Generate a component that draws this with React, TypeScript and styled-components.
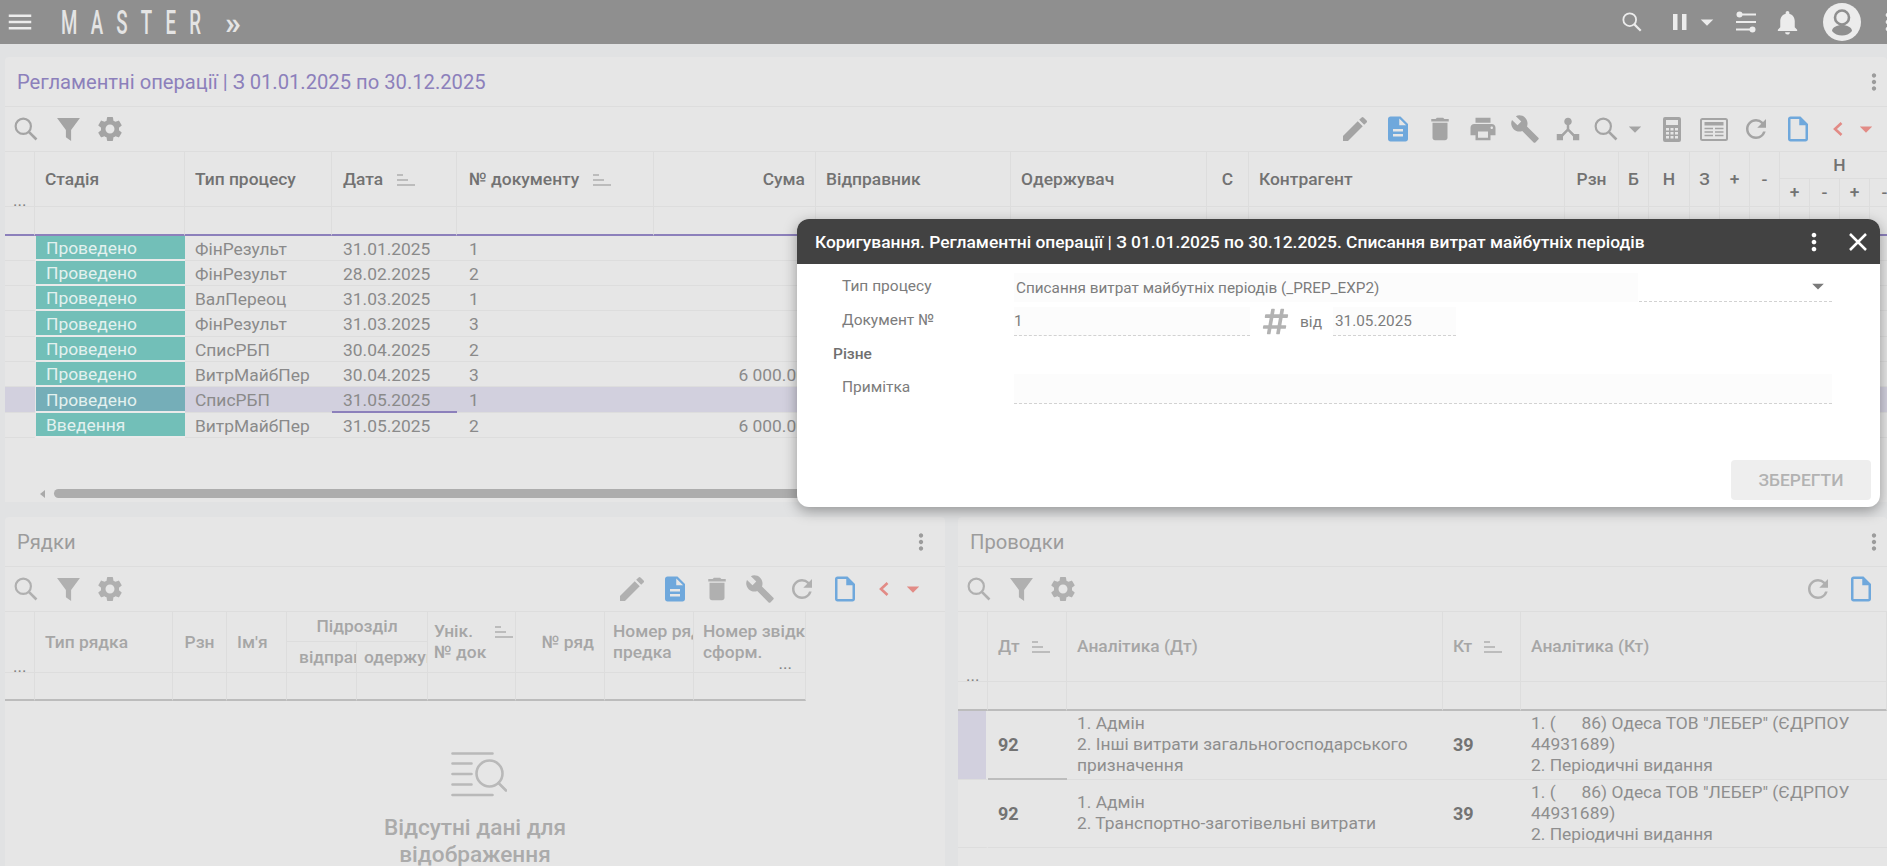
import React from 'react';

import styled, { createGlobalStyle } from 'styled-components';
import {
  MdMenu,
  MdEdit,
  MdDescription,
  MdDelete,
  MdPrint,
  MdBuild,
  MdDeviceHub,
  MdRefresh,
  MdOutlineInsertDriveFile,
  MdSettings,
  MdMoreVert,
  MdArrowDropDown,
  MdNotifications,
} from 'react-icons/md';
import { FaHashtag } from 'react-icons/fa';

const BLUE = '#6fa8dc';
const RED = '#e28b86';
const LINE = '#dddddd';

const GlobalStyle = createGlobalStyle`
  html, body {
    margin: 0;
    height: 100%;
    overflow: hidden;
    background: #e1e2e3;
    font-family: Roboto, "Noto Sans", sans-serif;
  }
`;

const Page = styled.div`
  position: relative;
  display: flex;
  flex-direction: column;
  height: 100vh;
  overflow: hidden;
`;

const TopBar = styled.header`
  flex: none;
  display: flex;
  align-items: center;
  height: 44px;
  padding-left: 5px;
  background: #8f8f8f;
  color: #ececec;
  overflow: hidden;
`;

const Logo = styled.div`
  display: flex;
  align-items: center;
  width: 162px;
  height: 44px;
  margin-left: 26px;
`;

const LogoText = styled.span`
  display: inline-block;
  font-size: 34px;
  font-weight: 500;
  letter-spacing: 24px;
  line-height: 40px;
  white-space: nowrap;
  transform: scaleX(0.55);
  transform-origin: left center;
  color: #e4e4e4;
`;

const LogoLast = styled.span`
  letter-spacing: 0;
`;

const LogoArrows = styled.span`
  margin-left: 2px;
  margin-top: 2px;
  font-size: 32px;
  line-height: 40px;
  font-weight: 700;
  color: #e4e4e4;
`;

const TopActions = styled.div`
  display: flex;
  align-items: center;
  margin-left: auto;
  flex: none;
  margin-right: -15px;
`;

const TopIcon = styled.span<{ $w: number }>`
  display: flex;
  align-items: center;
  justify-content: center;
  flex: none;
  width: ${(p) => p.$w}px;
  height: 44px;

  svg {
    flex: none;
  }
`;

const Content = styled.main`
  flex: 1;
  min-height: 0;
  display: flex;
  flex-direction: column;
  gap: 15px;
  padding: 13px 0 0 5px;
`;

const Panel = styled.section<{ $height?: number; $width?: number }>`
  display: flex;
  flex-direction: column;
  flex: ${(p) => (p.$width || p.$height ? 'none' : '1')};
  min-width: 0;
  width: ${(p) => (p.$width ? `${p.$width}px` : 'auto')};
  height: ${(p) => (p.$height ? `${p.$height}px` : 'auto')};
  background: #e6e6e6;
  border-radius: 4px 4px 0 0;
  overflow: hidden;
`;

const BottomRow = styled.div`
  flex: 1;
  min-height: 0;
  display: flex;
  gap: 13px;
`;

const PanelHead = styled.div`
  flex: none;
  display: flex;
  align-items: center;
  justify-content: space-between;
  box-sizing: border-box;
  height: 50px;
  padding: 0 0 0 12px;
  border-bottom: 1px solid ${LINE};
`;

const PanelTitle = styled.h2<{ $accent?: boolean }>`
  margin: 0;
  font-size: 20.2px;
  font-weight: 400;
  color: ${(p) => (p.$accent ? '#8c80bb' : '#9c9c9c')};
`;

const Kebab = styled.span<{ $inset?: number }>`
  display: flex;
  align-items: center;
  justify-content: center;
  width: 26px;
  margin-right: ${(p) => p.$inset ?? 0}px;
  color: #9c9c9c;
`;

const ToolBar = styled.div<{ $faded?: boolean }>`
  flex: none;
  display: flex;
  align-items: center;
  justify-content: space-between;
  box-sizing: border-box;
  height: 45px;
  border-bottom: 1px solid ${LINE};
  color: ${(p) => (p.$faded ? '#b0b0b0' : '#a4a4a4')};
`;

const ToolGroup = styled.div<{ $right?: number }>`
  display: flex;
  align-items: center;
  padding-right: ${(p) => p.$right ?? 0}px;
`;

const ToolBtn = styled.span<{ $w?: number; $tone?: string }>`
  display: flex;
  align-items: center;
  justify-content: center;
  flex: none;
  width: ${(p) => p.$w ?? 42.5}px;
  color: ${(p) => p.$tone ?? 'inherit'};

  svg {
    flex: none;
  }
`;

const TableClip = styled.div`
  flex: none;
  overflow: hidden;
`;

const Table = styled.table<{ $width: number }>`
  table-layout: fixed;
  width: ${(p) => p.$width}px;
  border-collapse: separate;
  border-spacing: 0;
`;

const HeadCell = styled.th<{ $align?: string; $faded?: boolean; $corner?: boolean; $pad?: number }>`
  box-sizing: border-box;
  padding: 0 ${(p) => (p.$corner ? 8 : p.$pad ?? (p.$align === 'center' ? 0 : 10))}px;
  font-size: 17.4px;
  font-weight: 500;
  line-height: 21px;
  text-align: ${(p) => p.$align ?? 'left'};
  vertical-align: ${(p) => (p.$corner ? 'bottom' : 'middle')};
  white-space: nowrap;
  overflow: hidden;
  color: ${(p) => (p.$faded ? '#a6a6a6' : '#727272')};
  border-right: 1px solid ${LINE};
  border-bottom: 1px solid ${LINE};
`;

const Dots = styled.span`
  display: block;
  font-size: 17px;
  font-weight: 400;
  line-height: 12px;
  color: #808080;
`;

// the "more columns" mark sits in the cell corner, below the two header lines
const DotsRight = styled(Dots)`
  position: relative;
  top: 6px;
  margin-top: -12px;
  margin-right: 4px;
  text-align: right;
`;

const FilterCell = styled.td<{ $line: string }>`
  box-sizing: border-box;
  border-right: 1px solid ${LINE};
  border-bottom: 2px solid ${(p) => p.$line};
`;

const Row = styled.tr<{ $selected?: boolean; $height: number }>`
  height: ${(p) => p.$height}px;
  background: ${(p) => (p.$selected ? '#d2d0de' : 'transparent')};
`;

const Cell = styled.td<{ $align?: string; $current?: boolean; $pad?: number }>`
  box-sizing: border-box;
  padding: 1px ${(p) => p.$pad ?? 10}px 0;
  font-size: 17.4px;
  line-height: 22px;
  white-space: nowrap;
  overflow: hidden;
  color: #8a8a8a;
  text-align: ${(p) => p.$align ?? 'left'};
  border-bottom: ${(p) => (p.$current ? '2px solid #8c80bb' : `1px solid ${LINE}`)};
`;

const StatusCell = styled.td<{ $selected?: boolean }>`
  box-sizing: border-box;
  padding: 1px 10px 0;
  font-size: 17.4px;
  line-height: 22px;
  color: #e3f1ef;
  background: ${(p) => (p.$selected ? '#75aeb8' : '#72bfb8')};
  border-left: 1px solid #e6e6e6;
  border-bottom: 2px solid #eaeaea;
`;

const EntryRow = styled.tr`
  height: 68.5px;
  vertical-align: middle;
`;

const EntryMark = styled.td<{ $selected?: boolean }>`
  box-sizing: border-box;
  background: ${(p) => (p.$selected ? '#d2d0de' : 'transparent')};
  border-right: 2px solid #e6e6e6;
  border-bottom: 1px solid ${LINE};
`;

const EntryAccount = styled.td<{ $current?: boolean }>`
  box-sizing: border-box;
  padding: 0 10px;
  font-size: 18px;
  font-weight: 700;
  color: #737373;
  border-bottom: ${(p) => (p.$current ? '2px solid #bdbdbd' : `1px solid ${LINE}`)};
`;

const EntryText = styled.td`
  box-sizing: border-box;
  padding: 0 10px;
  font-size: 17.4px;
  line-height: 21px;
  color: #8e8e8e;
  white-space: pre;
  overflow: hidden;
  border-bottom: 1px solid ${LINE};
`;

const ScrollTrack = styled.div`
  display: flex;
  align-items: center;
  gap: 9px;
  margin-top: auto;
  margin-bottom: 4px;
  padding-left: 35px;
`;

const ScrollArrow = styled.span`
  width: 0;
  height: 0;
  border-top: 4px solid transparent;
  border-bottom: 4px solid transparent;
  border-right: 5px solid #a9a9a9;
`;

const ScrollThumb = styled.span`
  width: 1700px;
  height: 9px;
  border-radius: 5px;
  background: #adadad;
`;

const EmptyState = styled.div`
  display: flex;
  flex-direction: column;
  align-items: center;
  padding-top: 51px;
  color: #ababab;
  font-size: 22.6px;
  font-weight: 500;
  line-height: 27px;
  text-align: center;
`;

const EmptyText = styled.div`
  width: 240px;
  margin-top: 16px;
`;

const EmptyMark = styled.svg`
  margin-left: 8px;
`;

const Modal = styled.div`
  position: absolute;
  left: 797px;
  top: 219px;
  display: flex;
  flex-direction: column;
  width: 1083px;
  height: 288px;
  border-radius: 12px;
  background: #ffffff;
  box-shadow: 0 4px 14px rgba(0, 0, 0, 0.35);
  overflow: hidden;
`;

const ModalHead = styled.div`
  flex: none;
  display: flex;
  align-items: center;
  box-sizing: border-box;
  height: 45px;
  padding: 0 2px 0 18px;
  background: #424242;
  color: #ffffff;
`;

const ModalTitle = styled.div`
  flex: 1;
  font-size: 17.4px;
  font-weight: 500;
  white-space: nowrap;
`;

const ModalIcon = styled.span`
  display: flex;
  align-items: center;
  justify-content: center;
  width: 40px;
  margin-left: 4px;
`;

const ModalBody = styled.div`
  flex: 1;
  display: flex;
  flex-direction: column;
  padding: 9px 48px 0 0;
`;

const FormRow = styled.div`
  display: flex;
  align-items: center;
  margin-bottom: 5px;
`;

const FormLabel = styled.label`
  flex: none;
  width: 172px;
  margin-left: 45px;
  padding-bottom: 4px;
  font-size: 15.5px;
  color: #7c7c7c;
`;

const Field = styled.div<{ $width?: number; $height?: number; $flush?: boolean }>`
  display: flex;
  align-items: center;
  box-sizing: border-box;
  flex: ${(p) => (p.$width ? 'none' : '1')};
  width: ${(p) => (p.$width ? `${p.$width}px` : 'auto')};
  height: ${(p) => p.$height ?? 29}px;
  padding: 0 ${(p) => (p.$flush ? 0 : 2)}px;
  background: #fcfcfc;
  border-bottom: 1px dashed #d2d2d2;
  font-size: 15.3px;
  color: #7c7c7c;
`;

const SelectField = styled.div`
  position: relative;
  flex: 1;
  display: flex;
  height: 29px;
  box-sizing: border-box;
  border-bottom: 1px dashed #d2d2d2;
`;

const SelectValue = styled(Field)`
  width: 624px;
  flex: none;
  border-bottom: 0;
`;

const SelectCaret = styled.span`
  position: absolute;
  right: 0;
  top: -1px;
  color: #7a7a7a;
`;

const SectionLabel = styled.div`
  height: 33px;
  margin-left: 36px;
  font-size: 15.5px;
  font-weight: 500;
  line-height: 26px;
  color: #6f6f6f;
`;

const Hash = styled.span`
  display: flex;
  width: 50px;
  justify-content: center;
  color: #b2b2b2;
`;

const ByLabel = styled.span`
  width: 33px;
  font-size: 15.5px;
  color: #7c7c7c;
`;

const ModalFoot = styled.div`
  display: flex;
  justify-content: flex-end;
  margin: auto -39px 7px 0;
`;

const SaveButton = styled.button`
  width: 140px;
  height: 40px;
  border: 0;
  border-radius: 4px;
  background: #eeeeee;
  color: #b2b2b2;
  font-family: inherit;
  font-size: 17.4px;
  font-weight: 500;
`;

// drawings the icon packages don't have in the same shape

const SearchGlyph = ({ size = 24 }: { size?: number }) => (
  <svg width={size} height={size} viewBox="0 0 22 22" fill="none" stroke="currentColor" strokeWidth="2">
    <circle cx="8.5" cy="8.5" r="7" />
    <path d="M13.6 13.6 20.6 20.6" strokeWidth="2.4" />
  </svg>
);

const FunnelGlyph = () => (
  <svg width="25" height="25" viewBox="0 0 24 24" fill="currentColor">
    <path d="M1 1h22L14.5 12.5V23l-5-3.5v-7z" />
  </svg>
);

const SlidersGlyph = () => (
  <svg width="20" height="24" viewBox="0 0 20 24" fill="currentColor">
    <circle cx="3.5" cy="4.5" r="3" />
    <rect x="5" y="3.5" width="15" height="2" />
    <rect x="0" y="11" width="20" height="2" />
    <rect x="0" y="18.5" width="15" height="2" />
    <circle cx="16.5" cy="19.5" r="3" />
  </svg>
);

const PauseGlyph = () => (
  <svg width="14" height="16" viewBox="0 0 14 16" fill="currentColor">
    <rect x="0" y="0" width="4.5" height="16" />
    <rect x="9" y="0" width="4.5" height="16" />
  </svg>
);

const AvatarGlyph = () => (
  <svg width="38" height="38" viewBox="0 0 38 38">
    <circle cx="19" cy="19" r="19" fill="#ececec" />
    <circle cx="19" cy="14.5" r="7" fill="#ececec" stroke="#8f8f8f" strokeWidth="2.6" />
    <path d="M9 28c0-3.5 5-6 10-6s10 2.5 10 6c-2.5 3-6 4.6-10 4.6S11.500 31 9 28z" fill="#8f8f8f" />
  </svg>
);

const CalcGlyph = () => (
  <svg width="18" height="25" viewBox="0 0 18 25" fill="currentColor">
    <path d="M2 0h14a2 2 0 0 1 2 2v21a2 2 0 0 1-2 2H2a2 2 0 0 1-2-2V2a2 2 0 0 1 2-2zm1 3v5h12V3z" fillRule="evenodd" />
    <g fill="#e6e6e6">
      <rect x="3" y="11" width="3" height="2.500" />
      <rect x="7.500" y="11" width="3" height="2.500" />
      <rect x="12" y="11" width="3" height="2.500" />
      <rect x="3" y="15" width="3" height="2.500" />
      <rect x="7.500" y="15" width="3" height="2.500" />
      <rect x="12" y="15" width="3" height="2.500" />
      <rect x="3" y="19" width="3" height="2.500" />
      <rect x="7.500" y="19" width="3" height="2.500" />
      <rect x="12" y="19" width="3" height="2.500" />
    </g>
  </svg>
);

const NewsGlyph = () => (
  <svg width="28" height="23" viewBox="0 0 28 23" fill="none" stroke="currentColor">
    <rect x="1" y="1" width="26" height="21" rx="1.500" strokeWidth="2" />
    <rect x="4.500" y="4" width="19" height="3.500" fill="currentColor" stroke="none" />
    <path d="M4.500 10.500h8.500M4.500 14h8.500M4.500 17.500h8.500M15 10.500h8.500M15 14h8.500M15 17.500h8.500" strokeWidth="1.500" />
  </svg>
);

const ChevronGlyph = () => (
  <svg width="10" height="14" viewBox="0 0 10 14" fill="none" stroke="currentColor" strokeWidth="2.600">
    <path d="M8.500 1 2 7l6.500 6" />
  </svg>
);

const CloseGlyph = () => (
  <svg width="20" height="18" viewBox="0 0 20 18" fill="none" stroke="currentColor" strokeWidth="2.500">
    <path d="M2 1l16 16M18 1 2 17" />
  </svg>
);

const SortMark = styled.svg<{ $gap: number }>`
  margin-left: ${(p) => p.$gap}px;
  vertical-align: -1px;
  color: #bcbcbc;
`;

const SortGlyph = ({ gap = 14 }: { gap?: number }) => (
  <SortMark $gap={gap} width="18" height="12" viewBox="0 0 18 12" fill="currentColor">
    <rect x="0" y="0" width="6" height="2" />
    <rect x="0" y="5" width="11" height="2" />
    <rect x="0" y="10" width="18" height="2" />
  </SortMark>
);

const EmptyGlyph = () => (
  <EmptyMark width="56" height="46" viewBox="0 0 56 46" fill="none" stroke="#b9b9b9" strokeWidth="2.600" strokeLinecap="round">
    <path d="M1.500 1.500h40M1.500 11.500h19M1.500 22h19M1.500 32.500h19M1.500 43h40" />
    <circle cx="38.500" cy="21.500" r="13" />
    <path d="M47.500 31 55 38.500" />
  </EmptyMark>
);

const Tool = ({ w, tone, children }: { w?: number; tone?: string; children: React.ReactNode }) => (
  <ToolBtn $w={w} $tone={tone}>
    {children}
  </ToolBtn>
);

const LeftTools = () => (
  <ToolGroup>
    <Tool w={42}>
      <SearchGlyph />
    </Tool>
    <Tool w={42}>
      <FunnelGlyph />
    </Tool>
    <Tool w={42}>
      <MdSettings size={30} />
    </Tool>
  </ToolGroup>
);

const mainColumns = [30, 150, 147, 125, 197, 162, 195, 196, 42, 316, 54, 30, 41, 30, 30, 30, 30, 30, 30, 30];
const linesColumns = [30, 138, 54, 60, 70, 71, 88, 89, 89, 112];
const entryColumns = [30, 79, 376, 78, 366];

const operations = [
  { status: 'Проведено', type: 'ФінРезульт', date: '31.01.2025', no: '1', sum: '', h: 25 },
  { status: 'Проведено', type: 'ФінРезульт', date: '28.02.2025', no: '2', sum: '', h: 25 },
  { status: 'Проведено', type: 'ВалПереоц', date: '31.03.2025', no: '1', sum: '', h: 25 },
  { status: 'Проведено', type: 'ФінРезульт', date: '31.03.2025', no: '3', sum: '', h: 26 },
  { status: 'Проведено', type: 'СписРБП', date: '30.04.2025', no: '2', sum: '', h: 25 },
  { status: 'Проведено', type: 'ВитрМайбПер', date: '30.04.2025', no: '3', sum: '6 000.00', h: 25 },
  { status: 'Проведено', type: 'СписРБП', date: '31.05.2025', no: '1', sum: '', h: 26, selected: true },
  { status: 'Введення', type: 'ВитрМайбПер', date: '31.05.2025', no: '2', sum: '6 000.00', h: 25 },
];

const KONTRAGENT = '1. (      86) Одеса ТОВ "ЛЕБЕР" (ЄДРПОУ\n44931689)\n2. Періодичні видання';

const entries = [
  { dt: '92', dtText: '1. Адмін\n2. Інші витрати загальногосподарського\nпризначення', kt: '39', selected: true },
  { dt: '92', dtText: '1. Адмін\n2. Транспортно-заготівельні витрати', kt: '39', selected: false },
];

const Colgroup = ({ widths }: { widths: number[] }) => (
  <colgroup>
    {widths.map((w, i) => (
      <col key={i} width={w} />
    ))}
  </colgroup>
);

const MainTable = () => (
  <TableClip>
    <Table $width={mainColumns.reduce((a, b) => a + b, 0)}>
      <Colgroup widths={mainColumns} />
      <thead>
        <tr style={{ height: 27 }}>
          <HeadCell rowSpan={2} $corner>
            <Dots>...</Dots>
          </HeadCell>
          <HeadCell rowSpan={2}>Стадія</HeadCell>
          <HeadCell rowSpan={2}>Тип процесу</HeadCell>
          <HeadCell rowSpan={2} $pad={11}>
            Дата
            <SortGlyph />
          </HeadCell>
          <HeadCell rowSpan={2} $pad={12}>
            № документу
            <SortGlyph />
          </HeadCell>
          <HeadCell rowSpan={2} $align="right">
            Сума
          </HeadCell>
          <HeadCell rowSpan={2}>Відправник</HeadCell>
          <HeadCell rowSpan={2}>Одержувач</HeadCell>
          <HeadCell rowSpan={2} $align="center">
            С
          </HeadCell>
          <HeadCell rowSpan={2}>Контрагент</HeadCell>
          {['Рзн', 'Б', 'Н', 'З', '+', '-'].map((h) => (
            <HeadCell key={h} rowSpan={2} $align="center">
              {h}
            </HeadCell>
          ))}
          <HeadCell colSpan={4} $align="center">
            Н
          </HeadCell>
        </tr>
        <tr style={{ height: 28 }}>
          {['+', '-', '+', '-'].map((h, i) => (
            <HeadCell key={i} $align="center">
              {h}
            </HeadCell>
          ))}
        </tr>
        <tr style={{ height: 29 }}>
          {mainColumns.map((_, i) => (
            <FilterCell key={i} $line="#8c80bb" />
          ))}
        </tr>
      </thead>
      <tbody>
        {operations.map((op, i) => (
          <Row key={i} $selected={op.selected} $height={op.h}>
            <Cell />
            <StatusCell $selected={op.selected}>{op.status}</StatusCell>
            <Cell>{op.type}</Cell>
            <Cell $current={op.selected} $pad={11}>
              {op.date}
            </Cell>
            <Cell $pad={12}>{op.no}</Cell>
            <Cell $align="right">{op.sum}</Cell>
            <Cell colSpan={14} />
          </Row>
        ))}
      </tbody>
    </Table>
  </TableClip>
);

const LinesTable = () => (
  <TableClip>
    <Table $width={linesColumns.reduce((a, b) => a + b, 0)}>
      <Colgroup widths={linesColumns} />
      <thead>
        <tr style={{ height: 30 }}>
          <HeadCell rowSpan={2} $corner $faded>
            <Dots>...</Dots>
          </HeadCell>
          <HeadCell rowSpan={2} $faded>
            Тип рядка
          </HeadCell>
          <HeadCell rowSpan={2} $faded $align="center">
            Рзн
          </HeadCell>
          <HeadCell rowSpan={2} $faded>
            Ім'я
          </HeadCell>
          <HeadCell colSpan={2} $faded $align="center">
            Підрозділ
          </HeadCell>
          <HeadCell rowSpan={2} $faded $pad={6}>
            Унік.
            <SortGlyph gap={22} />
            <br />№ док
          </HeadCell>
          <HeadCell rowSpan={2} $faded $align="right">
            № ряд
          </HeadCell>
          <HeadCell rowSpan={2} $faded $pad={8}>
            Номер рядка
            <br />
            предка
          </HeadCell>
          <HeadCell rowSpan={2} $faded $pad={9}>
            Номер звідки
            <br />
            сформ.
            <DotsRight>...</DotsRight>
          </HeadCell>
        </tr>
        <tr style={{ height: 31 }}>
          <HeadCell $faded $pad={12}>
            відправник
          </HeadCell>
          <HeadCell $faded $pad={7}>
            одержувач
          </HeadCell>
        </tr>
        <tr style={{ height: 28 }}>
          {linesColumns.map((_, i) => (
            <FilterCell key={i} $line="#bcbcbc" />
          ))}
        </tr>
      </thead>
    </Table>
  </TableClip>
);

const EntriesTable = () => (
  <TableClip>
    <Table $width={entryColumns.reduce((a, b) => a + b, 0)}>
      <Colgroup widths={entryColumns} />
      <thead>
        <tr style={{ height: 70 }}>
          <HeadCell $corner $faded>
            <Dots>...</Dots>
          </HeadCell>
          <HeadCell $faded>
            Дт
            <SortGlyph gap={12} />
          </HeadCell>
          <HeadCell $faded>Аналітика (Дт)</HeadCell>
          <HeadCell $faded>
            Кт
            <SortGlyph gap={12} />
          </HeadCell>
          <HeadCell $faded>Аналітика (Кт)</HeadCell>
        </tr>
        <tr style={{ height: 29 }}>
          {entryColumns.map((_, i) => (
            <FilterCell key={i} $line="#bcbcbc" />
          ))}
        </tr>
      </thead>
      <tbody>
        {entries.map((e, i) => (
          <EntryRow key={i}>
            <EntryMark $selected={e.selected} />
            <EntryAccount $current={e.selected}>{e.dt}</EntryAccount>
            <EntryText>{e.dtText}</EntryText>
            <EntryAccount>{e.kt}</EntryAccount>
            <EntryText>{KONTRAGENT}</EntryText>
          </EntryRow>
        ))}
      </tbody>
    </Table>
  </TableClip>
);

const App: React.FC = () => {
  return (
    <Page>
      <GlobalStyle />
      <TopBar>
        <MdMenu size={30} />
        <Logo>
          <LogoText>
            MASTE<LogoLast>R</LogoLast>
          </LogoText>
        </Logo>
        <LogoArrows>»</LogoArrows>
        <TopActions>
          <TopIcon $w={84}>
            <SearchGlyph size={20} />
          </TopIcon>
          <TopIcon $w={12}>
            <PauseGlyph />
          </TopIcon>
          <TopIcon $w={42}>
            <MdArrowDropDown size={30} />
          </TopIcon>
          <TopIcon $w={36}>
            <SlidersGlyph />
          </TopIcon>
          <TopIcon $w={46}>
            <MdNotifications size={29} />
          </TopIcon>
          <TopIcon $w={64}>
            <AvatarGlyph />
          </TopIcon>
          <TopIcon $w={28}>
            <MdMoreVert size={28} />
          </TopIcon>
        </TopActions>
      </TopBar>

      <Content>
        <Panel $height={445}>
          <PanelHead>
            <PanelTitle $accent>Регламентні операції | З 01.01.2025 по 30.12.2025</PanelTitle>
            <Kebab>
              <MdMoreVert size={30} />
            </Kebab>
          </PanelHead>
          <ToolBar>
            <LeftTools />
            <ToolGroup $right={17}>
              <Tool>
                <MdEdit size={32} />
              </Tool>
              <Tool tone={BLUE}>
                <MdDescription size={30} />
              </Tool>
              <Tool>
                <MdDelete size={30} />
              </Tool>
              <Tool>
                <MdPrint size={30} />
              </Tool>
              <Tool>
                <MdBuild size={30} />
              </Tool>
              <Tool>
                <MdDeviceHub size={30} />
              </Tool>
              <Tool w={34}>
                <SearchGlyph />
              </Tool>
              <Tool w={24}>
                <MdArrowDropDown size={30} />
              </Tool>
              <Tool w={50}>
                <CalcGlyph />
              </Tool>
              <Tool w={34}>
                <NewsGlyph />
              </Tool>
              <Tool w={50}>
                <MdRefresh size={30} />
              </Tool>
              <Tool w={33} tone={BLUE}>
                <MdOutlineInsertDriveFile size={30} />
              </Tool>
              <Tool w={47} tone={RED}>
                <ChevronGlyph />
              </Tool>
              <Tool w={9} tone={RED}>
                <MdArrowDropDown size={30} />
              </Tool>
            </ToolGroup>
          </ToolBar>
          <MainTable />
          <ScrollTrack>
            <ScrollArrow />
            <ScrollThumb />
          </ScrollTrack>
        </Panel>

        <BottomRow>
          <Panel $width={940}>
            <PanelHead>
              <PanelTitle>Рядки</PanelTitle>
              <Kebab $inset={11}>
                <MdMoreVert size={30} />
              </Kebab>
            </PanelHead>
            <ToolBar $faded>
              <LeftTools />
              <ToolGroup $right={20}>
                <Tool>
                  <MdEdit size={32} />
                </Tool>
                <Tool tone={BLUE}>
                  <MdDescription size={30} />
                </Tool>
                <Tool>
                  <MdDelete size={30} />
                </Tool>
                <Tool>
                  <MdBuild size={30} />
                </Tool>
                <Tool>
                  <MdRefresh size={30} />
                </Tool>
                <Tool tone={BLUE}>
                  <MdOutlineInsertDriveFile size={30} />
                </Tool>
                <Tool w={35} tone={RED}>
                  <ChevronGlyph />
                </Tool>
                <Tool w={24} tone={RED}>
                  <MdArrowDropDown size={30} />
                </Tool>
              </ToolGroup>
            </ToolBar>
            <LinesTable />
            <EmptyState>
              <EmptyGlyph />
              <EmptyText>Відсутні дані для відображення</EmptyText>
            </EmptyState>
          </Panel>

          <Panel>
            <PanelHead>
              <PanelTitle>Проводки</PanelTitle>
              <Kebab>
                <MdMoreVert size={30} />
              </Kebab>
            </PanelHead>
            <ToolBar $faded>
              <LeftTools />
              <ToolGroup $right={5}>
                <Tool>
                  <MdRefresh size={30} />
                </Tool>
                <Tool tone={BLUE}>
                  <MdOutlineInsertDriveFile size={30} />
                </Tool>
              </ToolGroup>
            </ToolBar>
            <EntriesTable />
          </Panel>
        </BottomRow>
      </Content>

      <Modal>
        <ModalHead>
          <ModalTitle>Коригування. Регламентні операції | З 01.01.2025 по 30.12.2025. Списання витрат майбутніх періодів</ModalTitle>
          <ModalIcon>
            <MdMoreVert size={28} />
          </ModalIcon>
          <ModalIcon>
            <CloseGlyph />
          </ModalIcon>
        </ModalHead>
        <ModalBody>
          <FormRow>
            <FormLabel>Тип процесу</FormLabel>
            <SelectField>
              <SelectValue>Списання витрат майбутніх періодів (_PREP_EXP2)</SelectValue>
              <SelectCaret>
                <MdArrowDropDown size={28} />
              </SelectCaret>
            </SelectField>
          </FormRow>
          <FormRow>
            <FormLabel>Документ №</FormLabel>
            <Field $width={236} $flush>
              1
            </Field>
            <Hash>
              <FaHashtag size={29} />
            </Hash>
            <ByLabel>від</ByLabel>
            <Field $width={123}>31.05.2025</Field>
          </FormRow>
          <SectionLabel>Різне</SectionLabel>
          <FormRow>
            <FormLabel>Примітка</FormLabel>
            <Field $height={30} />
          </FormRow>
          <ModalFoot>
            <SaveButton type="button">ЗБЕРЕГТИ</SaveButton>
          </ModalFoot>
        </ModalBody>
      </Modal>
    </Page>
  );
};

export default App;
